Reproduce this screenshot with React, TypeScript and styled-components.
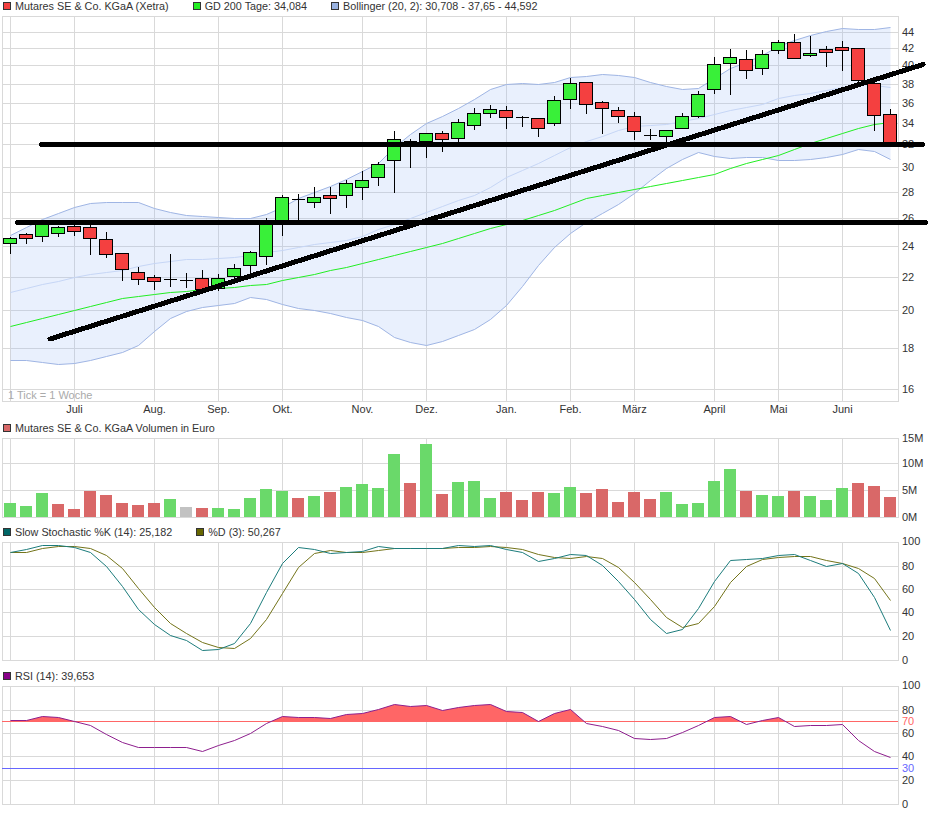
import React from "react";
import styled, { createGlobalStyle } from "styled-components";

const GlobalStyle = createGlobalStyle`
  html, body { margin: 0; padding: 0; background: #fff; }
`;

const Page = styled.div`
  width: 940px;
  height: 814px;
  display: flex;
  flex-direction: column;
  overflow: hidden;
  font-family: "Liberation Sans", Arial, sans-serif;
  font-size: 10.8px;
  color: #333;
`;
const Legend = styled.div<{ $top?: boolean }>`
  box-sizing: border-box;
  height: 16px;
  display: flex;
  align-items: center;
  gap: 24px;
  padding-left: 3px;
  padding-bottom: ${(p) => (p.$top ? "4px" : "0")};
  flex: none;
`;
const LegendItem = styled.div`
  display: flex;
  align-items: center;
  gap: 4px;
  white-space: nowrap;
  line-height: 12px;
`;
const Swatch = styled.span<{ $c: string }>`
  width: 6px;
  height: 6px;
  border: 1px solid #333;
  background: ${(p) => p.$c};
  flex: none;
`;
const Chart = styled.svg`
  display: block;
  flex: none;
  overflow: visible;
`;
const GridLine = styled.line`
  stroke: #d9d9d9;
  stroke-width: 1;
  shape-rendering: crispEdges;
`;
const Band = styled.polygon`
  fill: rgba(153, 187, 245, 0.22);
  stroke: none;
`;
const Curve = styled.polyline<{ $c: string; $w?: number }>`
  fill: none;
  stroke: ${(p) => p.$c};
  stroke-width: ${(p) => p.$w ?? 1};
  stroke-linejoin: round;
`;
const Wick = styled.line`
  stroke: #000;
  stroke-width: 1;
  shape-rendering: crispEdges;
`;
const Body = styled.rect<{ $up: boolean }>`
  fill: ${(p) => (p.$up ? "#39f039" : "#f44040")};
  stroke: #000;
  stroke-width: 1;
  shape-rendering: crispEdges;
`;
const Doji = styled.line`
  stroke: #000;
  stroke-width: 1.4;
  shape-rendering: crispEdges;
`;
const Bar = styled.rect<{ $c: string }>`
  fill: ${(p) => p.$c};
  shape-rendering: crispEdges;
`;
const AxisText = styled.text<{ $c?: string; $anchor?: string }>`
  font-family: "Liberation Sans", Arial, sans-serif;
  font-size: 11px;
  fill: ${(p) => p.$c ?? "#333"};
  text-anchor: ${(p) => p.$anchor ?? "start"};
`;
const TickNote = styled.text`
  font-family: "Liberation Sans", Arial, sans-serif;
  font-size: 11px;
  fill: #aaa;
`;
const TrendLine = styled.line<{ $w: number }>`
  stroke: #000;
  stroke-width: ${(p) => p.$w};
  stroke-linecap: round;
  shape-rendering: crispEdges;
`;
const LevelLine = styled.line<{ $c: string }>`
  stroke: ${(p) => p.$c};
  stroke-width: 1;
  shape-rendering: crispEdges;
`;
const RsiFill = styled.path`
  fill: #ff6666;
`;

const VX = [10, 74, 154, 218, 282, 362, 426, 506, 570, 634, 714, 778, 842];
const LEFT = 2;
const RIGHT = 898;
const MONTHS: [string, number][] = [
  ["Juli", 74], ["Aug.", 154], ["Sep.", 218], ["Okt.", 282], ["Nov.", 362], ["Dez.", 426],
  ["Jan.", 506], ["Feb.", 570], ["März", 634], ["April", 714], ["Mai", 778], ["Juni", 842],
];
const ix = (i: number) => 10 + 16 * i;
const pts = (a: number[]) => a.map((y, i) => `${ix(i) + 0.5},${y + 0.5}`).join(" ");

const PRICE_TICKS: [string, number][] = [
  ["44", 32], ["42", 48], ["40", 65], ["38", 84], ["36", 103], ["34", 123], ["32", 144], ["30", 167],
  ["28", 192], ["26", 218], ["24", 246], ["22", 277], ["20", 310], ["18", 348], ["16", 389],
];

const UPPER = [235,227,219,213,207,203,202,202,202,208,212,215,216,217,218,218,214,207,198,192,186,179,171,163,147,134,123,116,108,99,89,84,83,84,82,77,76,74,75,77,82,86,89,88,78,68,62,55,46,40,35,31,28,29,29,27];
const LOWER = [360,360,362,364,363,360,356,352,345,331,318,311,307,305,303,297,299,304,308,310,313,317,320,326,337,342,345,341,335,329,319,305,286,265,247,233,222,213,204,193,180,168,159,152,156,158,157,157,160,160,159,157,154,149,151,159];
const MID = [292,288,284,281,277,274,272,270,266,263,261,259,259,258,257,255,252,250,247,244,242,240,236,229,224,218,212,206,200,195,187,177,170,163,155,147,141,136,130,126,125,124,121,118,114,110,107,104,98,95,93,90,87,84,85,87];
const GD200 = [326,322,318,314,310,306,302,298,296,294,292,291,289,288,287,285,284,280,277,274,270,267,263,259,255,251,247,243,238,233,228,224,220,215,210,204,198,195,192,189,186,183,180,177,174,168,163,159,155,149,143,138,133,128,124,122];

// [top, bottom, high, low, kind] kind: g green, r red, d doji
type C = [number, number, number, number, "g" | "r" | "d"];
const CANDLES: C[] = [
  [238,243,237,253,"g"],[234,238,233,243,"r"],[224,236,222,241,"g"],[227,233,226,236,"g"],
  [226,231,225,235,"r"],[227,238,225,254,"r"],[239,254,232,257,"r"],[253,269,253,280,"r"],
  [272,279,267,284,"r"],[277,281,275,289,"r"],[279,279,254,286,"d"],[280,280,273,287,"d"],
  [278,289,270,290,"r"],[278,288,274,290,"g"],[268,276,264,280,"g"],[252,265,251,273,"g"],
  [224,256,218,264,"g"],[197,220,195,235,"g"],[199,199,194,220,"d"],[197,202,187,207,"g"],
  [195,198,187,213,"r"],[183,195,180,207,"g"],[180,187,171,199,"g"],[164,177,162,185,"g"],
  [139,160,131,192,"g"],[141,141,139,167,"d"],[133,141,133,157,"g"],[133,139,131,151,"r"],
  [122,138,119,143,"g"],[113,125,108,129,"g"],[109,113,105,117,"g"],[110,117,106,128,"r"],
  [117,117,116,126,"d"],[118,128,118,136,"r"],[100,123,96,125,"g"],[83,99,78,108,"g"],
  [82,104,82,113,"r"],[102,108,101,133,"r"],[110,116,107,122,"r"],[116,131,112,139,"r"],
  [135,135,129,139,"d"],[130,136,130,142,"g"],[116,128,113,128,"g"],[94,116,91,117,"g"],
  [64,89,57,93,"g"],[57,63,49,94,"g"],[59,70,50,78,"r"],[54,68,50,74,"g"],
  [42,50,40,53,"g"],[42,58,34,58,"r"],[53,55,36,56,"g"],[49,52,46,66,"r"],
  [47,50,41,70,"r"],[48,80,48,83,"r"],[83,115,82,130,"r"],[114,144,109,144,"r"],
];

const G = "#6ad96a";
const R = "#d96868";
const N = "#c2c2c2";
const VOLUME: [number, string][] = [
  [503,G],[506,G],[493,G],[504,R],[509,R],[491,R],[495,R],[503,R],[505,R],[503,R],
  [499,G],[507,N],[508,R],[508,G],[509,G],[498,G],[489,G],[491,G],[498,R],[496,G],
  [492,R],[487,G],[484,G],[488,G],[454,G],[483,R],[444,G],[494,R],[482,G],[481,G],
  [498,G],[492,R],[500,R],[492,R],[493,G],[487,G],[493,R],[489,R],[502,R],[492,R],
  [499,R],[492,G],[504,G],[503,G],[481,G],[469,G],[491,R],[495,G],[496,G],[491,R],
  [496,G],[500,G],[488,G],[483,R],[486,R],[497,R],
];

const STOCH_K = [552,549,545,545,547,552,566,586,609,624,635,640,650,649,643,623,592,563,547,549,553,552,551,546,548,548,548,548,545,546,545,549,552,561,558,554,555,565,581,599,619,633,629,608,581,560,559,558,555,554,560,566,563,573,597,630];
const STOCH_D = [552,552,548,546,546,548,555,568,588,607,623,633,642,647,648,638,619,593,567,553,550,552,552,550,548,548,548,548,547,547,546,547,549,554,557,558,556,558,567,582,599,617,627,623,606,582,566,559,557,556,556,560,563,568,578,600];
const RSI = [720,720,716,717,721,725,734,742,747,747,747,747,751,745,740,733,723,716,717,717,718,714,713,709,704,706,705,710,707,705,704,711,712,721,713,709,723,726,730,738,739,738,732,725,717,716,724,720,717,726,725,725,724,740,751,757];

const Frame: React.FC<{ top: number; bottom: number; rows: number[] }> = ({ top, bottom, rows }) => (
  <>
    {rows.map((y) => (
      <GridLine key={`h${y}`} x1={LEFT} x2={RIGHT + 1} y1={y + 0.5} y2={y + 0.5} />
    ))}
    {VX.map((x) => (
      <GridLine key={`v${x}`} x1={x + 0.5} x2={x + 0.5} y1={top} y2={bottom + 1} />
    ))}
    <GridLine x1={LEFT + 0.5} x2={LEFT + 0.5} y1={top} y2={bottom + 1} />
    <GridLine x1={RIGHT + 0.5} x2={RIGHT + 0.5} y1={top} y2={bottom + 1} />
    <GridLine x1={LEFT} x2={RIGHT + 1} y1={top + 0.5} y2={top + 0.5} />
    <GridLine x1={LEFT} x2={RIGHT + 1} y1={bottom + 0.5} y2={bottom + 0.5} />
  </>
);

const YLabels: React.FC<{ ticks: [string, number][] }> = ({ ticks }) => (
  <>
    {ticks.map(([t, y]) => (
      <AxisText key={t} x={902} y={y + 4}>
        {t}
      </AxisText>
    ))}
  </>
);

const PriceChart = () => (
  <Chart width={940} height={404} viewBox="0 16 940 404">
    <Frame top={16} bottom={401} rows={PRICE_TICKS.map((t) => t[1])} />
    <Band points={[...UPPER.map((y, i) => `${ix(i) + 0.5},${y + 0.5}`), ...LOWER.map((y, i) => `${ix(i) + 0.5},${y + 0.5}`).reverse()].join(" ")} />
    <Curve points={pts(MID)} $c="#c6d6f6" />
    <Curve points={pts(UPPER)} $c="#9fb5e4" />
    <Curve points={pts(LOWER)} $c="#9fb5e4" />
    <Curve points={pts(GD200)} $c="#22ee22" />
    {CANDLES.map(([t, b, h, l, k], i) => {
      const x = ix(i);
      return (
        <g key={i}>
          <Wick x1={x + 0.5} x2={x + 0.5} y1={h} y2={l + 1} />
          {k === "d" ? (
            <Doji x1={x - 6} x2={x + 7} y1={t + 0.5} y2={t + 0.5} />
          ) : (
            <Body $up={k === "g"} x={x - 6.5} y={t + 0.5} width={13} height={b - t} />
          )}
        </g>
      );
    })}
    <YLabels ticks={PRICE_TICKS} />
    {MONTHS.map(([m, x]) => (
      <AxisText key={m} x={x + 0.5} y={413} $anchor="middle">
        {m}
      </AxisText>
    ))}
    <TickNote x={8} y={399}>1 Tick = 1 Woche</TickNote>
    <TrendLine $w={4.5} x1={41} x2={923} y1={144.5} y2={144.5} />
    <TrendLine $w={4.5} x1={17} x2={926} y1={222.5} y2={222.5} />
    <TrendLine $w={5} x1={50} x2={923} y1={339} y2={64.5} />
  </Chart>
);

const VolumeChart = () => (
  <Chart width={940} height={88} viewBox="0 436 940 88">
    <Frame top={438} bottom={517} rows={[463, 490]} />
    {VOLUME.map(([top, c], i) => (
      <Bar key={i} $c={c} x={ix(i) - 6} y={top} width={12} height={517 - top} />
    ))}
    <YLabels ticks={[["15M", 438], ["10M", 463], ["5M", 490], ["0M", 517]]} />
  </Chart>
);

const StochChart = () => (
  <Chart width={940} height={128} viewBox="0 540 940 128">
    <Frame top={542} bottom={660} rows={[566, 589, 612, 636]} />
    <Curve points={pts(STOCH_D)} $c="#74741a" />
    <Curve points={pts(STOCH_K)} $c="#1c7c7c" />
    <YLabels ticks={[["100", 541], ["80", 566], ["60", 589], ["40", 612], ["20", 636], ["0", 660]]} />
  </Chart>
);

const rsiPath = `M10.5,721.5 ${RSI.map((y, i) => `L${ix(i) + 0.5},${y + 0.5}`).join(" ")} L890.5,721.5 Z`;

const RsiChart = () => (
  <Chart width={940} height={130} viewBox="0 684 940 130">
    <defs>
      <clipPath id="above70">
        <rect x={0} y={680} width={940} height={41.5} />
      </clipPath>
    </defs>
    <Frame top={686} bottom={804} rows={[710, 733, 756, 780]} />
    <RsiFill d={rsiPath} clipPath="url(#above70)" />
    <LevelLine $c="#ff6666" x1={LEFT} x2={RIGHT} y1={721.5} y2={721.5} />
    <LevelLine $c="#6666ff" x1={LEFT} x2={RIGHT} y1={768.5} y2={768.5} />
    <Curve points={pts(RSI)} $c="#8e1f8e" />
    <YLabels ticks={[["100", 685], ["80", 710], ["60", 733], ["40", 756], ["20", 780], ["0", 804]]} />
    <AxisText x={902} y={725} $c="#ff6666">70</AxisText>
    <AxisText x={902} y={772} $c="#6666ff">30</AxisText>
  </Chart>
);

export default function App() {
  return (
    <Page>
      <GlobalStyle />
      <Legend $top>
        <LegendItem><Swatch $c="#f44040" />Mutares SE &amp; Co. KGaA (Xetra)</LegendItem>
        <LegendItem><Swatch $c="#22ee22" />GD 200 Tage: 34,084</LegendItem>
        <LegendItem><Swatch $c="#99b2e0" />Bollinger (20, 2): 30,708 - 37,65 - 44,592</LegendItem>
      </Legend>
      <PriceChart />
      <Legend>
        <LegendItem><Swatch $c="#d96868" />Mutares SE &amp; Co. KGaA Volumen in Euro</LegendItem>
      </Legend>
      <VolumeChart />
      <Legend>
        <LegendItem><Swatch $c="#006666" />Slow Stochastic %K (14): 25,182</LegendItem>
        <LegendItem><Swatch $c="#666600" />%D (3): 50,267</LegendItem>
      </Legend>
      <StochChart />
      <Legend>
        <LegendItem><Swatch $c="#880088" />RSI (14): 39,653</LegendItem>
      </Legend>
      <RsiChart />
    </Page>
  );
}
